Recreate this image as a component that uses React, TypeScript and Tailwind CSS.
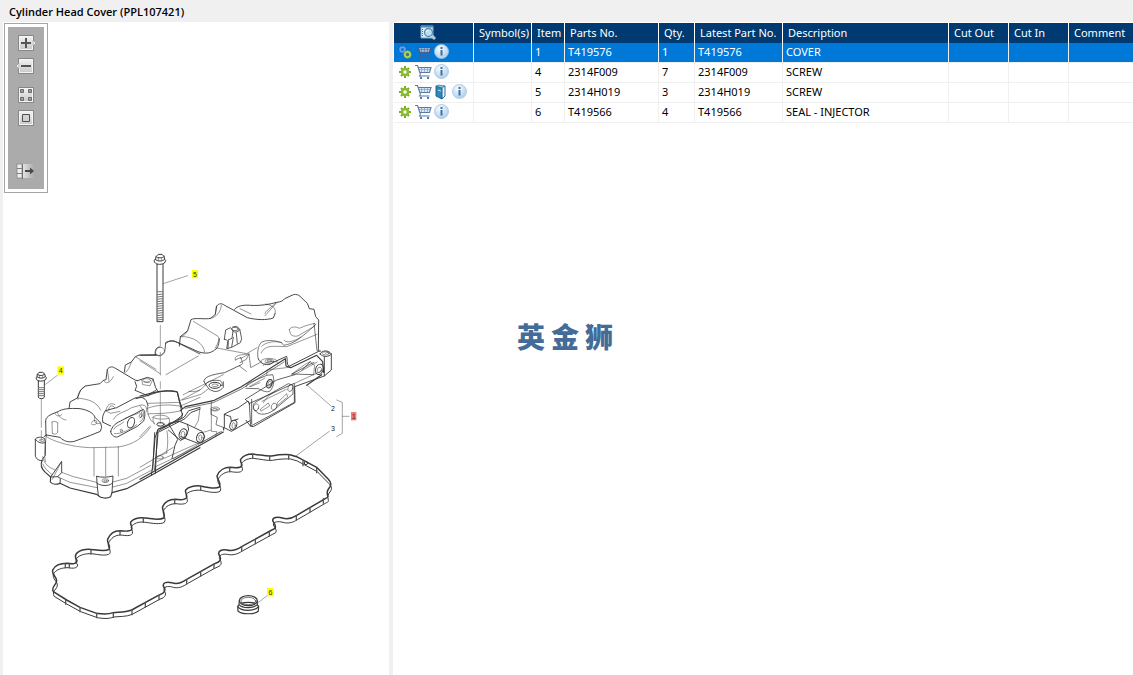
import type { ReactNode } from 'react';

type Part = {
  item: string;
  partNo: string;
  qty: string;
  latest: string;
  description: string;
  selected?: boolean;
  book?: boolean;
};

const parts: Part[] = [
  { item: '1', partNo: 'T419576', qty: '1', latest: 'T419576', description: 'COVER', selected: true },
  { item: '4', partNo: '2314F009', qty: '7', latest: '2314F009', description: 'SCREW' },
  { item: '5', partNo: '2314H019', qty: '3', latest: '2314H019', description: 'SCREW', book: true },
  { item: '6', partNo: 'T419566', qty: '4', latest: 'T419566', description: 'SEAL - INJECTOR' },
];

const columns = ['Symbol(s)', 'Item', 'Parts No.', 'Qty.', 'Latest Part No.', 'Description', 'Cut Out', 'Cut In', 'Comment'];

const ToolButton = ({ label, className = '', children }: { label: string; className?: string; children: ReactNode }) => (
  <button type="button" aria-label={label} title={label} className={`block h-[17px] w-5 ${className}`}>
    <svg width="20" height="17" viewBox="0 0 20 17">
      <defs>
        <linearGradient id="face" x1="0" y1="0" x2="0" y2="1">
          <stop offset="0" stopColor="#f2f2f2" />
          <stop offset="1" stopColor="#c9c9c9" />
        </linearGradient>
        <linearGradient id="fade" x1="0" y1="0" x2="1" y2="0">
          <stop offset="0" stopColor="#e2e2e2" />
          <stop offset="1" stopColor="#ababab" />
        </linearGradient>
      </defs>
      {children}
    </svg>
  </button>
);

const Face = () => (
  <>
    <rect x="2" y="0" width="16" height="16" rx="1" fill="#868686" />
    <rect x="3.5" y="1.5" width="13" height="13" fill="url(#face)" stroke="#f4f4f4" />
  </>
);

const Toolbar = () => (
  <div className="ml-px mt-px w-11 border border-[#a5a5a5] bg-white p-[3px]">
    <div className="flex h-[162px] flex-col items-center bg-[#ababab] pt-2">
      <ToolButton label="Zoom in">
        <Face />
        <path d="M17 5l3 3-3 3z" fill="#eeeeee" stroke="#8c8c8c" strokeWidth="0.6" />
        <path d="M5 8h10M10 3v10" stroke="#555555" strokeWidth="2" />
      </ToolButton>
      <ToolButton label="Zoom out" className="mt-1.5">
        <Face />
        <path d="M3 5L0 8l3 3z" fill="#eeeeee" stroke="#8c8c8c" strokeWidth="0.6" />
        <path d="M5 8h10" stroke="#555555" strokeWidth="2" />
      </ToolButton>
      <ToolButton label="Fit to window" className="mt-3">
        <Face />
        <path d="M4.5 2.5h3v3h-3zM12.5 2.5h3v3h-3zM4.5 10.5h3v3h-3zM12.5 10.5h3v3h-3z" fill="#a0a0a0" stroke="#6a6a6a" />
      </ToolButton>
      <ToolButton label="Actual size" className="mt-1.5">
        <Face />
        <path d="M6.5 4.5h7v7h-7z" fill="#d2d2d2" stroke="#4f4f4f" />
      </ToolButton>
      <ToolButton label="Hide list" className="mt-9">
        <path d="M1 1h5v14H1z" fill="#eeeeee" stroke="#858585" strokeWidth="0.8" />
        <path d="M1 5.5h5M1 10.5h5" stroke="#808080" />
        <path d="M7 1h11v14H7z" fill="url(#fade)" />
        <path d="M6.5 1v15" stroke="#707070" />
        <path d="M9 8h7" stroke="#484848" strokeWidth="2" />
        <path d="M14 4.500L18 8l-4 3.500z" fill="#484848" />
      </ToolButton>
    </div>
  </div>
);

const gasket =
  'M70 455C62 440 80 435 80 422C80 410 65 405 68 390C75 375 95 370 112 370C128 373 140 372 141 362C134 352 134 345 142 338C155 328 175 327 190 329C210 332 228 335 237 328C243 318 230 308 233 298C240 280 255 272 270 272C285 274 300 276 305 268C308 258 298 252 303 245C315 233 330 232 345 234C365 237 390 241 401 234C408 222 395 210 398 200C405 185 420 178 436 178C450 180 465 181 470 172C472 162 464 158 467 150C475 140 495 136 512 138C530 142 555 148 568 141C575 130 562 120 561 108C568 90 585 82 600 82C615 84 630 86 635 78C638 70 629 66 632 58C640 46 655 42 668 42C690 44 710 50 725 48C745 44 765 43 780 44L800 50L860 82L895 118C905 128 903 135 900 140C892 150 890 155 893 168C895 172 893 172 882 178L800 226C785 236 770 238 757 234C742 230 728 232 728 242C732 250 740 258 735 265L720 273L635 320C620 330 605 334 590 330C575 328 565 332 566 342C572 352 575 360 565 366L550 373L470 418C450 432 435 432 425 428C410 424 398 428 400 438C405 446 408 452 398 460L385 466L305 510C285 518 265 516 250 518C230 525 215 522 200 520L150 502L110 480Z';

const Callout = ({ x, y, width = 20, n, fill = '#ffff00' }: { x: number; y: number; width?: number; n: string; fill?: string }) => (
  <g>
    <rect x={x} y={y} width={width} height="25" fill={fill} stroke="none" />
    <text x={x + width / 2} y={y + 20} textAnchor="middle" fill="#333333" stroke="none">{n}</text>
  </g>
);

/* Exploded view, drawn at three units to the pixel */
const Diagram = () => (
  <svg
    role="img"
    aria-label="Cylinder head cover exploded view"
    viewBox="9 579 1158 1446"
    className="block w-full"
    fontFamily='"Liberation Sans", Arial, sans-serif'
    fontSize="21"
    fill="none"
    stroke="#3a3a3a"
    strokeLinecap="round"
    strokeLinejoin="round"
  >
    {/* cover, left half */}
    <g transform="translate(60 1020)">
      <g strokeWidth="2.8">
        <path d="M147 206L150 186L172 174L182 150L196 138L240 131L250 121L258 119L262 88C268 80 276 79 283 83L345 120L353 122" />
        <path d="M313 96L316 75L334 66L346 50L358 45L408 44" />
        <path d="M77 245C75 232 88 224 112 216C128 206 146 204 180 206C205 210 221 220 225 232L242 249L245 262L241 274L212 286L163 304C145 308 132 304 120 292L79 285" />
        <path d="M77 245L78 285M72 290L79 285" />
        <path d="M46 297C50 291 64 289 74 296L76 307C68 312 52 308 46 297V349C50 359 58 362 66 362" />
        <path d="M76 307V346C71 352 67 356 66 362" />
        <path d="M66 362C61 372 65 386 76 397L92 411L91 426C96 433 108 434 120 430L150 444L230 463L235 467C242 476 262 476 272 470L276 458L320 446L397 404L540 323" strokeWidth="3.500" />
        <path d="M92 411L125 364V398L113 410L121 415L120 430M92 411L113 410" />
        <path d="M230 409C245 413 262 412 279 408L276 458M230 409L231 429L235 467M231 429C239 438 265 440 275 431" />
        <path d="M249 247C245 235 249 223 256 212L290 203L345 174C360 169 370 171 379 182L384 196M249 247L272 258" />
        <path d="M272 275C274 265 281 254 294 247L343 222L370 208C377 215 375 231 371 243L352 259L292 291C284 292 274 287 272 275Z" />
        <path d="M345 125L350 139L345 151L367 160L385 168C390 157 410 153 410 148M352 122L365 118L382 112L399 117L407 143L414 155" />
        <path d="M348 176L385 166L412 157C438 152 455 151 471 155L478 183L487 225" />
        <path d="M487 225C470 244 440 256 414 267L405 294L399 370L394 406M412 275L406 400" strokeWidth="3" />
        <path d="M416 268L470 244L493 231L506 212L540 202M409 280L452 258L495 236L512 218L540 207" />
      </g>
      <g strokeWidth="1.6">
        <path d="M172 174C205 178 228 183 242 210M196 138C177 150 172 165 174 178M250 121C258 134 270 130 280 110M262 88L267 124M334 66C328 81 326 92 315 98M346 50L408 88" />
        <path d="M112 216C115 228 124 238 138 240M105 221C110 231 121 229 126 223M96 246L97 280M113 249V276M96 246C103 242 112 245 113 249M97 280C102 285 112 283 113 276" />
        <path d="M215 249C216 242 224 239 230 244C232 252 224 257 215 253M225 232C218 243 229 255 240 250" />
        <path d="M79 285C75 320 72 345 76 365M78 289C100 305 160 323 220 323L295 321C340 314 370 294 392 260" />
        <path d="M222 323V408M257 322V407M295 320V408" />
        <path d="M68 350C73 374 86 381 105 390M125 397L160 410L230 427M68 372C75 387 84 393 96 404M121 414L150 427L232 443M278 426L320 415L392 376M279 441L320 430L394 391" />
        <path d="M97 418L122 369M59 300C62 296 71 297 72 302C68 307 60 305 59 300" />
        <ellipse cx="256" cy="422" rx="10" ry="6" /><ellipse cx="256" cy="423" rx="5" ry="3" />
        <path d="M258 212C260 194 272 186 285 194M266 211C266 196 278 193 284 203M256 212L272 220L300 214M281 238C288 220 310 219 335 203L363 195C378 194 382 204 379 215" />
        <ellipse cx="333" cy="248" rx="10" ry="16" transform="rotate(20 333 248)" strokeWidth="2.800" />
        <ellipse cx="304" cy="272" rx="3" ry="5" /><ellipse cx="362" cy="227" rx="4" ry="6" transform="rotate(20 362 227)" />
        <path d="M281 268C287 256 300 257 311 246M283 281C301 283 329 270 350 254M314 236C330 226 349 224 359 218" />
        <ellipse cx="380" cy="121" rx="12" ry="5" /><path d="M372 126L388 128M365 118L368 134L390 137L399 117" />
        <path d="M384 190L480 187M382 205C410 194 450 192 482 199M383 222C400 219 430 224 484 212M383 196C381 220 386 237 403 251M396 233C400 224 440 221 447 235C452 250 446 260 430 262M404 252C397 242 398 237 401 232M403 234C420 240 440 236 447 235" />
        <ellipse cx="422" cy="253" rx="12" ry="6" /><ellipse cx="420" cy="352" rx="10" ry="5" />
        <path d="M407 352L442 338M441 273C445 300 443 326 439 338M406 367L455 345L540 307M405 381L540 316" />
        <path d="M478 183L540 150M482 198L540 172" />
        <path d="M406 44C403 30 410 19 420 21M408 44C418 52 433 42 435 29L437 10M437 10C447 2 460 -1 469 6L540 42" strokeWidth="2.500" />
      </g>
    </g>

    {/* cover, right half */}
    <g transform="translate(420 720)">
      <g strokeWidth="2.8">
        <path d="M0 346H49M76 309C86 300 100 303 112 307L177 336C202 343 213 338 224 330C235 324 237 309 238 296" />
        <path d="M118 318L121 290L143 272L153 239C164 232 195 239 212 235L226 223L230 198C237 189 247 190 254 196L322 233C350 240 380 241 400 234L405 221" />
        <path d="M284 208C290 198 310 194 332 196C360 198 390 193 410 187C421 186 429 183 434 176L460 164C470 162 476 165 480 169L502 190L508 206L522 208L527 230L536 240L535 330" />
        <path d="M355 357C350 340 354 318 364 307C375 301 395 298 425 308L431 316C450 312 470 309 528 252M522 250L531 332L542 334" strokeWidth="2" />
        <path d="M355 357C362 371 375 376 390 373L402 366L440 349C443 356 439 374 447 379L526 339L540 332" />
        <path d="M0 468L40 458C65 451 85 450 112 456L119 485L127 507M121 512L136 500L220 482L304 440L436 356L438 378L452 383L530 346L548 365L551 397" strokeWidth="3.500" />
        <path d="M135 505L220 488L306 446L432 366" strokeWidth="2" />
        <path d="M540 342C545 330 566 329 574 342V390L553 408M574 342C566 352 550 352 540 342M553 350V408L464 440L465 488L340 560L331 558L318 541" />
        <path d="M316 478L410 420L464 404M329 490L463 430V487L333 558ZM316 478L329 490M335 478V552" strokeWidth="2.400" />
        <path d="M346 512C337 504 338 490 348 486L382 466L445 431L459 436V462L406 506C388 524 356 530 346 512Z" strokeWidth="2.200" />
        <path d="M253 523L265 516L294 504L324 483L329 494M253 523V563L274 574L330 542M253 523L272 530L274 544L294 537" />
        <path d="M300 368L319 358L327 342L332 383L365 365M286 360L303 352L308 371L298 378L319 394" strokeWidth="1.800" />
        <path d="M318 440L324 430L380 406L398 404C404 420 402 438 391 452C382 460 367 452 355 446L318 445M456 402L510 373L522 367M456 402L521 404M486 391L511 365L520 375" strokeWidth="2.200" />
        <path d="M192 425C190 412 211 404 254 398L300 376M192 425L206 446C224 460 239 455 250 442V425M196 435C199 424 215 421 230 421C242 420 248 426 247 437" strokeWidth="2.400" />
        <path d="M214 486L213 523L232 532L228 554L252 563" strokeWidth="2" />
        <path d="M250 576L60 684L0 718M500 436L545 404M251 563V570" strokeWidth="3.500" />
        <path d="M87 550L118 544L142 553L146 567L140 586L122 602L85 570M142 553L186 574L194 590L187 607L174 610L122 590M86 552L113 598L105 616L96 656" />
        <path d="M54 581L44 690M53 574L90 553L125 533L128 520M44 578L38 690" />
      </g>
      <g strokeWidth="1.6">
        <path d="M46 344C46 330 53 319 64 322M160 244L234 289C239 297 235 308 226 324M121 290C160 287 192 312 194 336M143 272C132 292 128 286 121 290M212 235C228 233 243 215 244 196M226 223L229 199M230 324L320 341L351 323M405 221C410 206 400 196 376 192M300 206L333 222M375 220C377 212 395 201 408 189M375 227L411 187" />
        <path d="M64 322C75 326 78 337 70 342C63 349 53 350 49 342M0 362L62 402M78 404L175 348M130 464L184 437L250 404M146 454C180 460 190 440 196 435M127 480L183 463L206 446" />
        <path d="M286 360C283 350 290 344 327 342M327 342L301 356M432 301C440 313 475 299 483 290M448 269C451 259 470 259 477 265L501 256L524 250M448 269L452 283C460 291 473 290 480 284L525 258M425 308C405 301 375 307 365 319M364 339C370 323 385 318 410 319L440 320L531 283M362 363C365 354 402 351 411 362M369 377C374 365 398 361 414 367" />
        <ellipse cx="388" cy="364" rx="13" ry="6" /><ellipse cx="388" cy="363" rx="7" ry="3" /><ellipse cx="225" cy="436" rx="18" ry="9" strokeWidth="3" /><ellipse cx="225" cy="436" rx="9" ry="4" />
        <ellipse cx="388" cy="431" rx="8" ry="13" transform="rotate(20 388 431)" strokeWidth="3" /><ellipse cx="389" cy="431" rx="5" ry="8" transform="rotate(20 389 431)" />
        <ellipse cx="538" cy="388" rx="11" ry="16" transform="rotate(20 538 388)" strokeWidth="3" /><ellipse cx="538" cy="390" rx="6" ry="9" transform="rotate(20 538 390)" />
        <ellipse cx="280" cy="555" rx="10" ry="15" transform="rotate(20 280 555)" strokeWidth="3" /><ellipse cx="281" cy="557" rx="5" ry="9" />
        <ellipse cx="451" cy="444" rx="7" ry="11" transform="rotate(20 451 444)" /><ellipse cx="348" cy="502" rx="8" ry="11" transform="rotate(20 348 502)" /><ellipse cx="402" cy="500" rx="8" ry="11" transform="rotate(20 402 500)" />
        <path d="M362 507L385 489L389 498L364 513ZM412 488L440 461L443 471L412 496ZM366 484L439 448M370 488L384 469L406 454" />
        <ellipse cx="225" cy="507" rx="13" ry="6" /><ellipse cx="225" cy="508" rx="7" ry="3" /><path d="M214 508V574L231 575L227 586M180 504L175 542L164 562M186 578L213 570" />
        <ellipse cx="129" cy="582" rx="11" ry="16" transform="rotate(20 129 582)" strokeWidth="3" /><ellipse cx="129" cy="583" rx="6" ry="9" /><ellipse cx="181" cy="592" rx="11" ry="15" transform="rotate(20 181 592)" strokeWidth="3" /><ellipse cx="181" cy="593" rx="5" ry="8" />
        <path d="M0 682L100 622M187 606L245 574M100 656L240 576M0 498C14 512 16 538 0 545M0 590L28 560M0 510C8 517 8 529 0 535" />
        <path d="M464 404L487 391L532 366M464 430L544 393M556 340C560 336 568 337 569 341M328 440L375 414M331 440L360 428" />
        <ellipse cx="557" cy="340" rx="10" ry="5" /><path d="M511 365C497 370 478 386 456 402M521 404L524 375M380 404L382 390L447 382" />
      </g>
      {/* upright boss */}
      <path d="M253 298L257 270L272 263L279 273L276 295L264 300L260 326L275 322L301 308L305 296L299 267L290 259L278 261M260 300L253 298M279 273C283 279 293 277 299 270M264 325L265 303M275 321L280 292M289 279L292 310" strokeWidth="2.500" />
      <ellipse cx="285" cy="267" rx="10" ry="5" strokeWidth="2" />
      {/* long screw */}
      <g strokeWidth="3">
        <path d="M49 49L55 43H66L72 49L74 58L77 61L75 67C68 75 49 75 44 67L42 61L46 58ZM48 50C53 55 68 55 73 49M46 58C53 65 67 65 74 58" />
        <path d="M55 54V62M65 54V62" strokeWidth="1.600" />
        <path d="M51 73V245H69V73" />
        <path d="M52 155H68M52 164L68 162M52 171L68 169M52 178L68 176M52 185L68 183M52 192L68 190M52 199L68 197M52 206L68 204M52 213L68 211M52 220L68 218M52 227L68 225M52 234L68 232M52 240L68 238" stroke="#777777" />
      </g>
      <path d="M61 256V318M61 337V405M61 425V446M61 458V551M69 131L143 107" stroke="#777777" strokeWidth="2" />
      <ellipse cx="61" cy="553" rx="10" ry="5" strokeWidth="2" />
      {/* leaders and bracket */}
      <path d="M502 436L572 497M568 574L466 649M590 480L607 487V580L590 590M607 529H627" stroke="#777777" strokeWidth="2" />
      <text x="573" y="514" fill="#222222" stroke="none">2</text>
      <text x="573" y="573" fill="#222222" stroke="none">3</text>
      <Callout x={156} y={90} width={18} n="5" />
      <Callout x={633} y={516} width={16} n="1" fill="#ff7474" />
    </g>

    {/* short screw */}
    <g transform="translate(60 1020)">
      <path d="M52 103L57 97H68L74 102L76 110L79 113L77 119C69 125 55 125 50 119L48 114L51 110ZM52 103C58 108 69 108 74 102M51 110C58 116 68 116 76 110M55 122V172C58 177 70 177 73 172V122" strokeWidth="3" />
      <path d="M58 107V114M68 107V114" strokeWidth="1.600" />
      <path d="M55 143H73M55 149H73M55 155H73M55 161H73M55 167H73" stroke="#777777" strokeWidth="3" />
      <path d="M64 178V262M64 272V302M75 134L112 106" stroke="#777777" strokeWidth="2" />
      <Callout x={112} y={79} n="4" />
    </g>

    {/* gasket */}
    <g transform="translate(90 1320)">
      <path d={gasket} strokeWidth="4.500" />
      <path d={gasket} transform="translate(2 13)" strokeWidth="3" />
      <path d="M106 371V383M118 371V383M183 330V342M270 273V285M340 235V247M434 179V191M512 139V151M599 83V95M668 43V55M719 49V61M776 45V57M819 64V77M860 85V98M880 176V190M840 203V216M799 227V240M718 275V288M676 298V311M635 321V334M552 372V385M512 395V408M470 419V432M387 466V479M346 488V501M306 511V524M250 520V532M200 521V533M150 503V515M107 480V493" stroke="#555555" strokeWidth="4" />
      <circle cx="828" cy="69" r="5" strokeWidth="3" />
    </g>

    {/* injector seal */}
    <g transform="translate(570 1320)">
      <g strokeWidth="3.500">
        <ellipse cx="175" cy="482" rx="27" ry="15" />
        <ellipse cx="175" cy="483" rx="22" ry="11" strokeWidth="2" />
        <path d="M148 482L147 494L143 499L144 513C155 524 194 524 205 513L206 499L202 494V482M147 494C158 506 190 506 202 494M143 499C153 515 195 515 206 499M154 490C163 486 187 486 196 490" />
      </g>
      <path d="M204 488L234 465" stroke="#777777" strokeWidth="2" />
      <Callout x={231} y={444} n="6" />
    </g>
  </svg>
);

const GearIcon = () => (
  <svg width="12" height="12" viewBox="0 0 12 12">
    <path d="M6 0v12M0 6h12M2 2l8 8M10 2l-8 8" stroke="#79ad24" strokeWidth="2" />
    <circle cx="6" cy="6" r="3" fill="#ffffff" stroke="#86bc2e" strokeWidth="2.500" />
  </svg>
);

const GearsIcon = () => (
  <svg width="14" height="14" viewBox="0 0 14 14">
    <path d="M4.500 0v8M0 4.500h8.500M1.500 1.500l6 6M7.500 1.500l-6 6" stroke="#1c55bd" strokeWidth="1.500" />
    <circle cx="4.500" cy="4.500" r="2.400" fill="#0078d7" stroke="#6f9ee6" strokeWidth="1.800" />
    <path d="M9.500 5v9M5 9.500h9M6.500 6.500l6 6M12.500 6.500l-6 6" stroke="#719a35" strokeWidth="1.800" />
    <circle cx="9.500" cy="9.500" r="2.600" fill="#4b6d91" stroke="#b0d55c" strokeWidth="1.800" />
  </svg>
);

const CartIcon = ({ selected }: { selected?: boolean }) => {
  const line = selected ? '#4c5f7e' : '#5579a8';
  return (
    <svg width="17" height="15" viewBox="0 0 17 15">
      <path d="M3.500 3.500h12l-1.500 5H5z" fill={selected ? '#8fb4dc' : '#dbe7f4'} />
      <path d="M3.500 5.500h11.500M6.500 3v5M9.500 3v5M12.500 3v5" stroke={selected ? '#6283ac' : '#8aa8cc'} strokeWidth="0.800" />
      <path d="M0 1.500h2.500l3 9M3 3.500h13L14.500 8.500H5M5.500 10.500L4.500 12h10" fill="none" stroke={line} strokeWidth="1.100" />
      <path d="M5 13h2v2H5zM12 13h2v2h-2z" fill={line} />
    </svg>
  );
};

const InfoIcon = () => (
  <svg width="15" height="15" viewBox="0 0 15 15">
    <defs>
      <radialGradient id="info" cx="0.400" cy="0.300" r="0.700">
        <stop offset="0" stopColor="#f8fcff" />
        <stop offset="1" stopColor="#aecfec" />
      </radialGradient>
    </defs>
    <circle cx="7.500" cy="7.500" r="7" fill="url(#info)" stroke="#a6c4de" strokeWidth="0.800" />
    <path d="M7.500 3v2M7.500 6v5.500" stroke="#3f6ea5" strokeWidth="2" />
  </svg>
);

const BookIcon = () => (
  <svg width="12" height="16" viewBox="0 0 12 16">
    <path d="M5 3l5-1v10l-3 3z" fill="#e2f2fa" stroke="#2a719d" />
    <path d="M1 2l6 2v11l-6-3z" fill="#2f86b9" stroke="#1d6593" />
    <path d="M1 2l3-1 6 1-3 2z" fill="#8cc4e2" stroke="#1c6795" strokeWidth="0.600" />
    <path d="M3 6l3 1" stroke="#c7e8f8" />
  </svg>
);

const PreviewIcon = () => (
  <svg width="17" height="16" viewBox="0 0 17 16">
    <path d="M1 1h12v12H1z" fill="#dcecf5" stroke="#7fa9c7" />
    <path d="M1 1.500h12" stroke="#4f86b1" strokeWidth="2" />
    <path d="M2.500 4v8" stroke="#467ba6" strokeDasharray="1 1" />
    <path d="M12 11l3 3" stroke="#b7c8d5" strokeWidth="3" />
    <circle cx="8.500" cy="7.500" r="4" fill="#b8e0f2" stroke="#548caf" strokeWidth="1.300" />
    <path d="M6.500 7c0-1.500 1-2 2-2" fill="none" stroke="#ffffff" />
  </svg>
);

const IconButton = ({ label, className, children }: { label: string; className: string; children: ReactNode }) => (
  <button type="button" aria-label={label} title={label} className={`flex h-4 shrink-0 items-center justify-center ${className}`}>
    {children}
  </button>
);

const PartsTable = () => (
  <table className="w-full table-fixed border-separate border-spacing-0 text-left text-[11px] leading-4">
    <colgroup>
      <col className="w-20" />
      <col className="w-[58px]" />
      <col className="w-[33px]" />
      <col className="w-[94px]" />
      <col className="w-9" />
      <col className="w-[88px]" />
      <col className="w-[166px]" />
      <col className="w-[60px]" />
      <col className="w-[60px]" />
      <col />
    </colgroup>
    <thead>
      <tr className="h-5 bg-[#003a70] text-white">
        <th className="border-r border-white py-0 pl-[26px] pr-0">
          <button type="button" aria-label="Preview" className="block w-[17px]">
            <PreviewIcon />
          </button>
        </th>
        {columns.map((name) => (
          <th key={name} className="whitespace-nowrap border-r border-white py-0 pl-[5px] pr-0 font-normal last:border-r-0">{name}</th>
        ))}
      </tr>
    </thead>
    <tbody>
      {parts.map((p) => (
        <tr key={p.item} className={p.selected ? 'h-5 bg-[#0078d7] text-white' : 'h-5 bg-white text-black'}>
          <td className="border-b border-r border-[#f0f0f0] px-0 pb-0.5 pt-0">
            <div className="flex items-center pl-[3px]">
              <IconButton label="Serviceable" className="w-[15px]">{p.selected ? <GearsIcon /> : <GearIcon />}</IconButton>
              <IconButton label="Add to cart" className="ml-[3px] w-[17px]"><CartIcon selected={p.selected} /></IconButton>
              {p.book && <IconButton label="Notes" className="ml-[3px] w-3"><BookIcon /></IconButton>}
              <IconButton label="Information" className={p.book ? 'ml-[5px] w-[15px]' : 'ml-0.5 w-[15px]'}><InfoIcon /></IconButton>
            </div>
          </td>
          {['', p.item, p.partNo, p.qty, p.latest, p.description, '', '', ''].map((value, i) => (
            <td key={i} className="whitespace-nowrap border-b border-r border-[#f0f0f0] pb-0.5 pl-[3px] pr-0 pt-0 last:border-r-0">{value}</td>
          ))}
        </tr>
      ))}
    </tbody>
  </table>
);

export default function App() {
  return (
    <div className="flex h-screen flex-col overflow-hidden bg-[#f0f0f0] font-['Noto_Sans','Noto_Sans_CJK_SC',sans-serif] text-black">
      <header className="flex h-[22px] shrink-0 items-center pl-[9px] pt-0.5">
        <h1 className="font-['Open_Sans',sans-serif] text-[11px] font-semibold leading-4">Cylinder Head Cover (PPL107421)</h1>
      </header>
      <main className="flex min-h-0 flex-1 pl-[3px]">
        <section className="w-[386px] shrink-0 overflow-hidden bg-white">
          <Toolbar />
          <Diagram />
        </section>
        <section className="ml-1 min-w-0 flex-1 bg-white pl-px pt-px">
          <PartsTable />
          <div lang="zh" className="ml-[123px] mt-[195px] flex gap-1.5 font-['Noto_Sans_CJK_SC',sans-serif] text-[28px] font-black leading-9 text-[#446c98]">
            <span>英</span>
            <span>金</span>
            <span>狮</span>
          </div>
        </section>
      </main>
    </div>
  );
}
